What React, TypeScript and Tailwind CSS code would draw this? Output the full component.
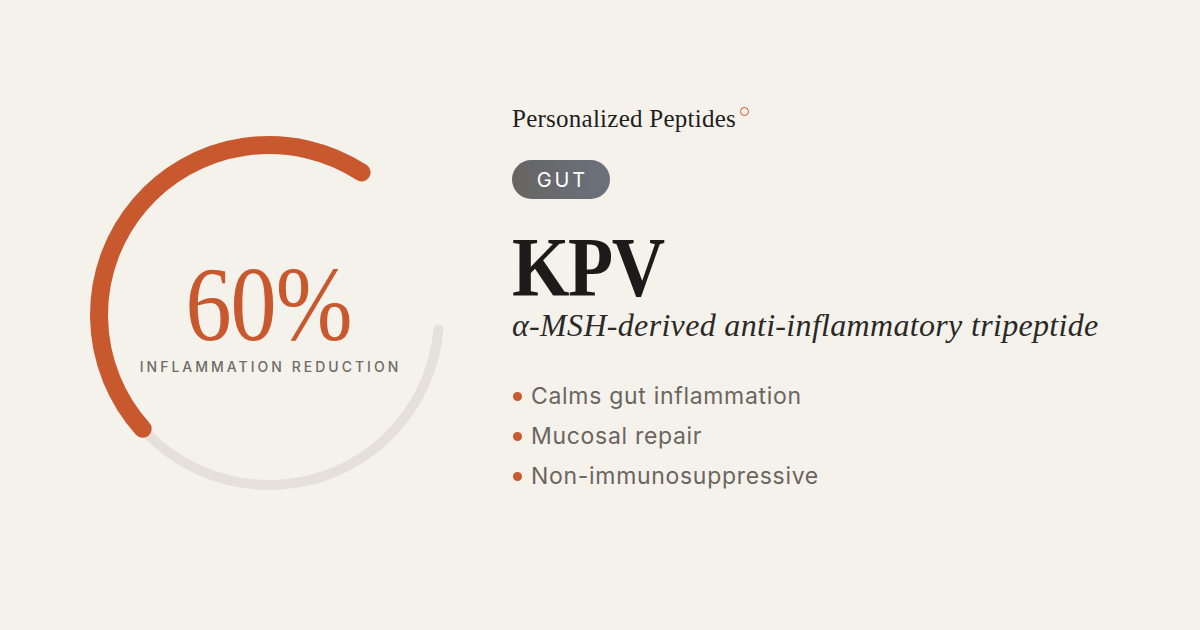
import React from "react";

export default function App() {
  const bullets = ["Calms gut inflammation", "Mucosal repair", "Non-immunosuppressive"];
  return (
    <div className="w-[1200px] h-[630px] bg-[#f5f2ec] flex pl-[89px] overflow-hidden">
      <div className="relative mt-[135px] w-[360px] h-[360px] shrink-0">
        <svg width="360" height="360" viewBox="0 0 360 360" className="absolute inset-0">
          <path
            d="M 349.35 194.82 A 170 170 0 1 1 265 32.78"
            fill="none"
            stroke="#e5e1da"
            strokeWidth="10"
            strokeLinecap="round"
          />
          <path
            d="M 53.67 293.75 A 170 170 0 0 1 272.59 37.42"
            fill="none"
            stroke="#c8582d"
            strokeWidth="18"
            strokeLinecap="round"
          />
        </svg>
        <div className="absolute inset-0 flex flex-col items-center pt-[120px]">
          <div className="text-[106px] leading-[100px] tracking-[-0.01em] text-[#c8582d] font-['Liberation_Serif',serif] scale-x-[0.87]">
            60%
          </div>
          <div className="mt-[5px] text-[14px] leading-[14px] tracking-[0.215em] pl-[0.215em] text-[#6f6b66] font-medium font-['Inter',sans-serif]">
            INFLAMMATION REDUCTION
          </div>
        </div>
      </div>
      <div className="ml-[63px] pt-[107px] flex flex-col items-start">
        <div className="flex items-start">
          <span className="text-[25px] leading-[24px] tracking-[0.01em] text-[#1f1e1c] font-['Liberation_Serif',serif]">
            Personalized Peptides
          </span>
          <span className="ml-[4px] mt-[0px] w-[9px] h-[9px] rounded-full border-[1.5px] border-[#c8582d]" />
        </div>
        <div className="mt-[29px] w-[98px] h-[39px] rounded-full bg-gradient-to-r from-[#666562] to-[#6b717d] flex items-center justify-center">
          <span className="text-[20px] leading-[20px] tracking-[0.14em] pl-[0.14em] text-white font-['Inter',sans-serif]">
            GUT
          </span>
        </div>
        <div className="mt-[27px] text-[84px] leading-[84px] font-bold tracking-[-0.02em] text-[#1c1b19] font-['Liberation_Serif',serif] origin-left scale-x-[0.88]">
          KPV
        </div>
        <div className="text-[32px] leading-[30px] italic tracking-[0.01em] text-[#2a2927] font-['Liberation_Serif',serif]">
          α-MSH-derived anti-inflammatory tripeptide
        </div>
        <ul className="mt-[36px] flex flex-col">
          {bullets.map((b) => (
            <li key={b} className="flex items-center h-[40px]">
              <span className="w-[9px] h-[9px] rounded-full bg-[#c8582d] mr-[9px] ml-[1px]" />
              <span className="text-[23px] leading-[40px] tracking-[0.03em] text-[#6a655e] font-['Inter',sans-serif]">{b}</span>
            </li>
          ))}
        </ul>
      </div>
    </div>
  );
}
